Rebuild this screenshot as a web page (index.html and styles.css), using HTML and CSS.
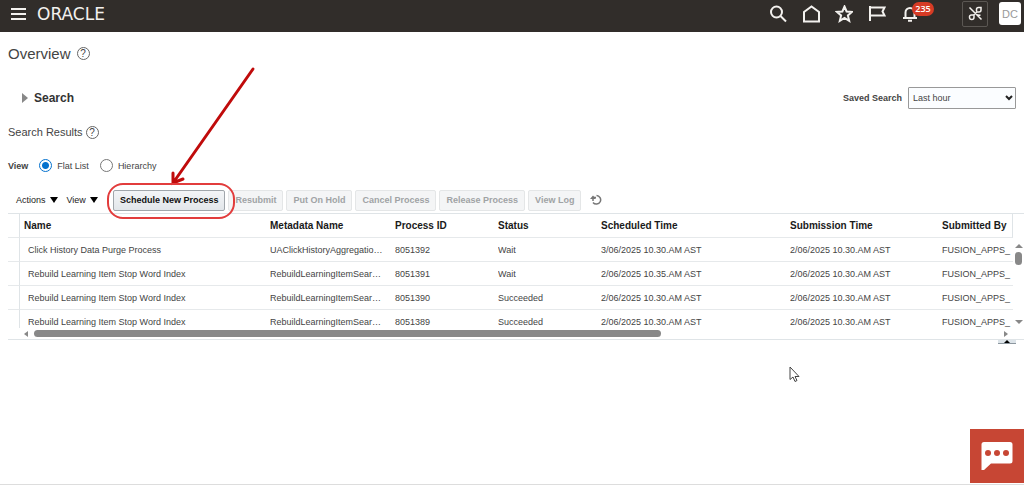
FILE: index.html
```
<!DOCTYPE html>
<html lang="en">
<head>
  <meta charset="UTF-8">
  <meta name="viewport" content="width=device-width, initial-scale=1.0">
  <title>Overview - Scheduled Processes</title>
  <link rel="stylesheet" href="styles.css">
</head>
<body>
  <header class="topbar">
    <button class="icon-btn menu" aria-label="Navigator">
      <svg width="16" height="12" viewBox="0 0 16 12"><path d="M0 1h15M0 6h15M0 11h15"/></svg>
    </button>
    <a href="#" class="logo">ORACLE</a>
    <nav class="top-icons">
      <button class="icon-btn" aria-label="Search">
        <svg width="18" height="18" viewBox="0 0 18 18"><circle cx="7.500" cy="7" r="5.500"/><path d="M11.500 11l5.500 5.500"/></svg>
      </button>
      <button class="icon-btn" aria-label="Home">
        <svg width="18" height="18" viewBox="0 0 18 18"><path d="M2 16.500V7l7.500-5.500L17 7v9.500z"/></svg>
      </button>
      <button class="icon-btn" aria-label="Favorites">
        <svg width="18" height="18" viewBox="0 0 18 18"><path d="M9.500 1.500l2.100 5 5.400.4-4.100 3.500 1.300 5.500-4.700-2.900-4.700 2.900 1.300-5.500L2 6.900l5.400-.4z"/></svg>
      </button>
      <button class="icon-btn" aria-label="Watchlist">
        <svg width="18" height="18" viewBox="0 0 18 18"><path d="M2 1v15M2 2.500h14.500l-2 4 2 4H2"/></svg>
      </button>
      <button class="icon-btn bell" aria-label="Notifications">
        <svg width="18" height="18" viewBox="0 0 18 18"><path d="M2 13h14M4.500 13V7.500a4.500 4.500 0 0 1 9 0V13M7 15.800h4"/></svg>
        <span class="badge">235</span>
      </button>
    </nav>
    <button class="icon-btn boxed" aria-label="Not connected">
      <svg width="15" height="15" viewBox="0 0 15 15"><path d="M1.500 1.500l12 12M8.500 5.500V3.500a2 2 0 0 1 2-2H13V4a2 2 0 0 1-2 2H9L5 9.500M1.500 10.800a1.800 1.800 0 0 1 1.800-1.800H6v2.200a2.200 2.200 0 0 1-4.500 0zM9.500 9l3 .2"/></svg>
    </button>
    <button class="avatar">DC</button>
  </header>

  <main>
    <div class="title-row">
      <h1>Overview</h1>
      <button class="help" aria-label="Help">?</button>
    </div>

    <div class="search-row">
      <button class="disclosure"><span class="tri-right"></span>Search</button>
      <div class="saved">
        <label for="saved-search">Saved Search</label>
        <div class="select-box">
          <select id="saved-search">
            <option>Last hour</option>
            <option>Last 24 hours</option>
          </select>
          <svg width="8" height="6" viewBox="0 0 8 6"><path d="M1 1l3 3 3-3"/></svg>
        </div>
      </div>
    </div>

    <div class="results-title">
      <h2>Search Results</h2>
      <button class="help" aria-label="Help">?</button>
    </div>

    <div class="view-row">
      <strong>View</strong>
      <input type="radio" name="view" id="flat" checked>
      <label for="flat">Flat List</label>
      <input type="radio" name="view" id="hier">
      <label for="hier">Hierarchy</label>
    </div>

    <div class="toolbar">
      <button class="menu-btn">Actions<span class="tri-down"></span></button>
      <button class="menu-btn">View<span class="tri-down"></span></button>
      <div class="highlight">
        <button class="btn primary">Schedule New Process</button>
        <svg class="arrow" width="90" height="122" viewBox="0 0 90 122">
          <path d="M86 3L6 117M6 107v10l10-4"/>
        </svg>
      </div>
      <button class="btn" disabled>Resubmit</button>
      <button class="btn" disabled>Put On Hold</button>
      <button class="btn" disabled>Cancel Process</button>
      <button class="btn" disabled>Release Process</button>
      <button class="btn" disabled>View Log</button>
      <button class="refresh" aria-label="Refresh">
        <svg width="12" height="12" viewBox="0 0 12 12"><path d="M6.500 1.500a4.300 4.300 0 1 1-3.500 7M3 7V3.500h3"/><path class="tip" d="M0 5h6L3 1.500z"/></svg>
      </button>
    </div>

    <div class="grid">
      <div class="grid-body">
        <table>
          <colgroup>
            <col class="c-head"><col class="c-name"><col class="c-meta"><col class="c-id"><col class="c-status"><col class="c-sched"><col class="c-sub"><col>
          </colgroup>
          <thead>
            <tr><th></th><th>Name</th><th>Metadata Name</th><th>Process ID</th><th>Status</th><th>Scheduled Time</th><th>Submission Time</th><th>Submitted By</th></tr>
          </thead>
          <tbody>
            <tr><td></td><td>Click History Data Purge Process</td><td>UAClickHistoryAggregatio…</td><td>8051392</td><td>Wait</td><td>3/06/2025 10.30.AM AST</td><td>2/06/2025 10.30.AM AST</td><td>FUSION_APPS_</td></tr>
            <tr><td></td><td>Rebuild Learning Item Stop Word Index</td><td>RebuildLearningItemSear…</td><td>8051391</td><td>Wait</td><td>2/06/2025 10.35.AM AST</td><td>2/06/2025 10.30.AM AST</td><td>FUSION_APPS_</td></tr>
            <tr><td></td><td>Rebuild Learning Item Stop Word Index</td><td>RebuildLearningItemSear…</td><td>8051390</td><td>Succeeded</td><td>2/06/2025 10.30.AM AST</td><td>2/06/2025 10.30.AM AST</td><td>FUSION_APPS_</td></tr>
            <tr><td></td><td>Rebuild Learning Item Stop Word Index</td><td>RebuildLearningItemSear…</td><td>8051389</td><td>Succeeded</td><td>2/06/2025 10.30.AM AST</td><td>2/06/2025 10.30.AM AST</td><td>FUSION_APPS_</td></tr>
          </tbody>
        </table>
      </div>
      <div class="vscroll">
        <span class="sb-up"></span>
        <span class="v-thumb"></span>
        <span class="sb-down"></span>
      </div>
      <div class="hscroll">
        <span class="sb-left"></span>
        <div class="h-track"><div class="h-thumb"></div></div>
        <span class="sb-right"></span>
      </div>
    </div>
    <button class="collapse" aria-label="Collapse pane"><span class="sb-up"></span></button>
  </main>

  <svg class="cursor" width="11" height="17" viewBox="0 0 11 17"><path d="M1 1v12.500l3-2.500 2 4.500 2-1-2-4h4z"/></svg>

  <button class="chat" aria-label="Chat">
    <svg width="32" height="28" viewBox="0 0 32 28">
      <path class="bubble" d="M3 0h26a2.500 2.500 0 0 1 2.500 2.500v16.500a2.500 2.500 0 0 1-2.500 2.500H10L3 28H.5V2.500A2.500 2.500 0 0 1 3 0z"/>
      <circle cx="7" cy="11" r="3"/><circle cx="16" cy="11" r="3"/><circle cx="25" cy="11" r="3"/>
    </svg>
  </button>
</body>
</html>
```
FILE: styles.css
```
* {
  box-sizing: border-box;
}
body {
  margin: 0;
  min-height: 100vh;
  font-family: "Liberation Sans", Arial, sans-serif;
  font-size: 9px;
  color: #444;
  background: #fff;
  border-bottom: 1px solid #ddd;
}
button, select {
  font-family: inherit;
  font-size: inherit;
  color: inherit;
  padding: 0;
  border: none;
  background: none;
  cursor: pointer;
}
svg {
  display: block;
  fill: none;
}

/* header */
.topbar {
  display: flex;
  align-items: center;
  height: 32px;
  padding: 0 3px 5px 11px;
  background: #312d2a;
}
.icon-btn svg {
  stroke: #f3f1ee;
  stroke-width: 2;
}
.logo {
  margin-left: 10px;
  font-family: "DejaVu Sans", sans-serif;
  font-size: 17px;
  color: #f3f1ee;
  text-decoration: none;
}
.top-icons {
  display: flex;
  gap: 15px;
  margin-left: auto;
}
.bell {
  position: relative;
}
.badge {
  position: absolute;
  top: -3px;
  left: 11px;
  width: 22px;
  height: 14px;
  border-radius: 7px;
  background: #d63b25;
  color: #fff;
  font-family: "Open Sans", sans-serif;
  font-weight: 600;
  line-height: 14px;
}
.boxed {
  display: flex;
  align-items: center;
  justify-content: center;
  width: 26px;
  height: 26px;
  margin-left: 43px;
  border: 1px solid #5b5753;
  border-radius: 2px;
}
.boxed svg {
  stroke-width: 1.5;
}
.avatar {
  width: 22px;
  height: 23px;
  margin-left: 11px;
  border-radius: 3px;
  background: #fff;
  color: #999;
  font-size: 11px;
}

/* page heading and search */
main {
  padding-left: 8px;
}
h1, h2 {
  margin: 0;
  font-weight: normal;
}
h1 {
  font-size: 15px;
}
h2 {
  font-size: 11px;
}
.title-row, .results-title {
  display: flex;
  align-items: center;
  gap: 6px;
}
.title-row {
  height: 42px;
}
.results-title {
  gap: 3px;
}
.help {
  width: 13px;
  height: 13px;
  border: 1px solid #666;
  border-radius: 50%;
  font-size: 10px;
  line-height: 11px;
}
.search-row {
  display: flex;
  align-items: center;
  justify-content: space-between;
  height: 48px;
  padding: 0 8px 0 14px;
}
.disclosure {
  display: flex;
  align-items: center;
  gap: 6px;
  font-size: 12px;
  font-weight: bold;
  color: #333;
}
.tri-right {
  border-left: 6px solid #888;
  border-top: 5px solid transparent;
  border-bottom: 5px solid transparent;
}
.saved {
  display: flex;
  align-items: center;
  gap: 6px;
  font-weight: bold;
}
.select-box {
  position: relative;
}
.select-box svg {
  position: absolute;
  top: 8px;
  right: 3px;
  stroke: #222;
  stroke-width: 2;
  pointer-events: none;
}
select {
  appearance: none;
  width: 108px;
  height: 22px;
  padding-left: 4px;
  border: 1px solid #999;
  border-radius: 1px;
  background: #fbfdff;
}
.results-title {
  height: 20px;
}
.view-row {
  display: flex;
  align-items: center;
  height: 47px;
}
.view-row input {
  appearance: none;
  width: 13px;
  height: 13px;
  margin: 0 5px 0 11px;
  border: 1px solid #777;
  border-radius: 50%;
}
.view-row input:checked {
  border-color: #0572ce;
  background: radial-gradient(#0572ce 3px, #fff 4px);
}

/* toolbar */
.toolbar {
  display: flex;
  align-items: center;
  gap: 3px;
  height: 24px;
  padding: 0 8px 2px;
}
.menu-btn {
  display: flex;
  align-items: center;
  gap: 4px;
  margin-right: 6px;
  color: #222;
}
.tri-down {
  border-top: 6px solid #000;
  border-left: 4px solid transparent;
  border-right: 4px solid transparent;
}
.highlight {
  position: relative;
  margin-left: 6px;
  z-index: 1;
}
.highlight::after {
  content: "";
  position: absolute;
  inset: -7px -10px -8px -6px;
  border: 2px solid #e23c3c;
  border-radius: 16px;
  pointer-events: none;
}
.arrow {
  position: absolute;
  left: 54px;
  bottom: 23px;
  stroke: #c00b0b;
  stroke-width: 3;
  stroke-linecap: round;
  pointer-events: none;
}
.btn {
  display: block;
  height: 21px;
  padding: 0 6px;
  border: 1px solid #e4e6e7;
  border-radius: 2px;
  background: #f4f5f6;
  color: #a0a3a5;
  font-weight: bold;
  white-space: nowrap;
}
.btn.primary {
  border-color: #a0a6ab;
  background: linear-gradient(#f3f5f7, #e2e6ea);
  color: #111;
}
.refresh {
  margin-left: 6px;
}
.refresh svg {
  stroke: #777;
  stroke-width: 1.5;
}
.refresh .tip {
  fill: #777;
  stroke: none;
}

/* results table */
.grid {
  display: grid;
  grid-template-columns: 1fr 11px;
  border-top: 1px solid #dfe4e7;
  border-bottom: 1px solid #dfe4e7;
}
.grid-body {
  height: 114px;
  overflow: hidden;
}
table {
  width: 100%;
  table-layout: fixed;
  border-collapse: separate;
  border-spacing: 0;
}
th, td {
  height: 24px;
  padding: 0;
  border-bottom: 1px solid #e6e9eb;
  text-align: left;
  white-space: nowrap;
  overflow: hidden;
}
th {
  font-size: 10px;
  color: #1a1a1a;
}
th:first-child, td:first-child, th:last-child {
  border-right: 1px solid #dfe4e7;
}
th:nth-child(2) {
  padding-left: 4px;
}
td:nth-child(2) {
  padding-left: 8px;
}
.c-head { width: 12px; }
.c-name { width: 250px; }
.c-meta { width: 125px; }
.c-id { width: 103px; }
.c-status { width: 103px; }
.c-sched { width: 189px; }
.c-sub { width: 152px; }

.vscroll {
  display: flex;
  flex-direction: column;
  align-items: center;
  padding: 30px 0 4px;
}
.sb-up {
  border-bottom: 4px solid #888;
  border-left: 4px solid transparent;
  border-right: 4px solid transparent;
}
.sb-down {
  margin-top: auto;
  border-top: 4px solid #888;
  border-left: 4px solid transparent;
  border-right: 4px solid transparent;
}
.v-thumb {
  width: 7px;
  height: 13px;
  margin-top: 4px;
  border-radius: 4px;
  background: #888;
}
.hscroll {
  display: flex;
  align-items: center;
  gap: 6px;
  height: 11px;
  padding: 0 5px 0 16px;
}
.sb-left {
  border-right: 4px solid #888;
  border-top: 3px solid transparent;
  border-bottom: 3px solid transparent;
}
.sb-right {
  border-left: 4px solid #888;
  border-top: 3px solid transparent;
  border-bottom: 3px solid transparent;
}
.h-track {
  flex: 1;
}
.h-thumb {
  width: 65%;
  height: 7px;
  border-radius: 4px;
  background: #888;
}
.collapse {
  display: flex;
  justify-content: center;
  width: 18px;
  height: 4px;
  margin: 0 8px 0 auto;
  border-bottom: 1px solid #8c979f;
  background: #dde4e9;
}
.collapse .sb-up {
  border-width: 0 3px 3px;
  border-bottom-color: #000;
}

.cursor {
  position: absolute;
  top: 366px;
  left: 789px;
  fill: #fff;
  stroke: #444;
}
.chat {
  position: fixed;
  right: 0;
  bottom: 2px;
  display: flex;
  align-items: center;
  justify-content: center;
  width: 54px;
  height: 54px;
  background: #c74634;
}
.chat .bubble {
  fill: #fff;
}
.chat circle {
  fill: #c74634;
}
```
